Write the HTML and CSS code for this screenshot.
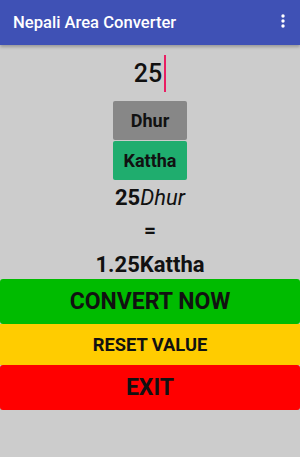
FILE: index.html
```html
<!DOCTYPE html>
<html lang="en">
<head>
  <meta charset="UTF-8">
  <title>Nepali Area Converter</title>
  <link rel="stylesheet" href="styles.css">
</head>
<body>

<div class="appbar">
  <span class="title">Nepali Area Converter</span>
  <svg class="menu" width="6" height="18" viewBox="0 0 6 18">
    <circle cx="3" cy="3" r="1.7" fill="#fff"/>
    <circle cx="3" cy="8" r="1.7" fill="#fff"/>
    <circle cx="3" cy="13" r="1.7" fill="#fff"/>
  </svg>
</div>

<div class="container">
  <div class="value-row">
    <span class="value">25</span>
    <span class="cursor"></span>
  </div>

  <div class="units">
    <button class="unit from">Dhur</button>
    <button class="unit to">Kattha</button>
  </div>

  <div class="line first"><b>25</b><i>Dhur</i></div>
  <div class="line equal"><b>=</b></div>
  <div class="line answer"><b>1.25Kattha</b></div>
</div>

<div class="actions">
  <button class="action convert">CONVERT NOW</button>
  <button class="action reset">RESET VALUE</button>
  <button class="action exit">EXIT</button>
</div>

</body>
</html>
```

FILE: styles.css
```css
body {
  margin: 0;
  background: #cccccc;
  font-family: Roboto, 'Noto Sans', sans-serif;
  color: #111;
}

.appbar {
  height: 45px;
  background: #3f51b5;
  display: flex;
  align-items: center;
  justify-content: space-between;
  padding: 0 14px 0 13px;
  box-shadow: 0 2px 3px rgba(0, 0, 0, 0.25);
}

.title {
  color: #fff;
  font-size: 16.6px;
  font-weight: 500;
}

.menu {
  margin-top: -2px;
}

.container {
  display: flex;
  flex-direction: column;
  align-items: center;
}

.value-row {
  display: flex;
  margin-top: 10px;
  height: 37px;
}

.value {
  font-size: 25px;
  line-height: 37px;
  font-weight: 500;
}

.cursor {
  width: 2px;
  margin-left: 2px;
  background: #e91e63;
}

.units {
  display: flex;
  flex-direction: column;
  gap: 1px;
  margin-top: 9px;
}

.unit {
  width: 74px;
  height: 39px;
  border: none;
  border-radius: 2px;
  font-family: inherit;
  font-size: 18px;
  font-weight: 700;
  color: #111;
  padding: 0;
}

.from {
  background: #878787;
}

.to {
  background: #1fad6e;
}

.line {
  font-size: 21px;
  line-height: 33px;
}

.line i {
  font-style: italic;
}

.first {
  font-size: 22px;
  margin-top: 1px;
}

.answer {
  font-size: 22px;
  line-height: 28px;
  margin-top: 4px;
}

.actions {
  display: flex;
  flex-direction: column;
}

.action {
  border: none;
  border-radius: 3px;
  font-family: inherit;
  font-weight: 700;
  color: #111;
  padding: 0;
  width: 100%;
}

.convert {
  background: #00bb00;
  height: 45px;
  font-size: 23px;
}

.reset {
  background: #ffcc00;
  height: 41px;
  font-size: 18.3px;
  border-radius: 0;
}

.exit {
  background: #ff0000;
  height: 45px;
  font-size: 23px;
  box-shadow: 0 1px 2px rgba(0, 0, 0, 0.2);
}
```
